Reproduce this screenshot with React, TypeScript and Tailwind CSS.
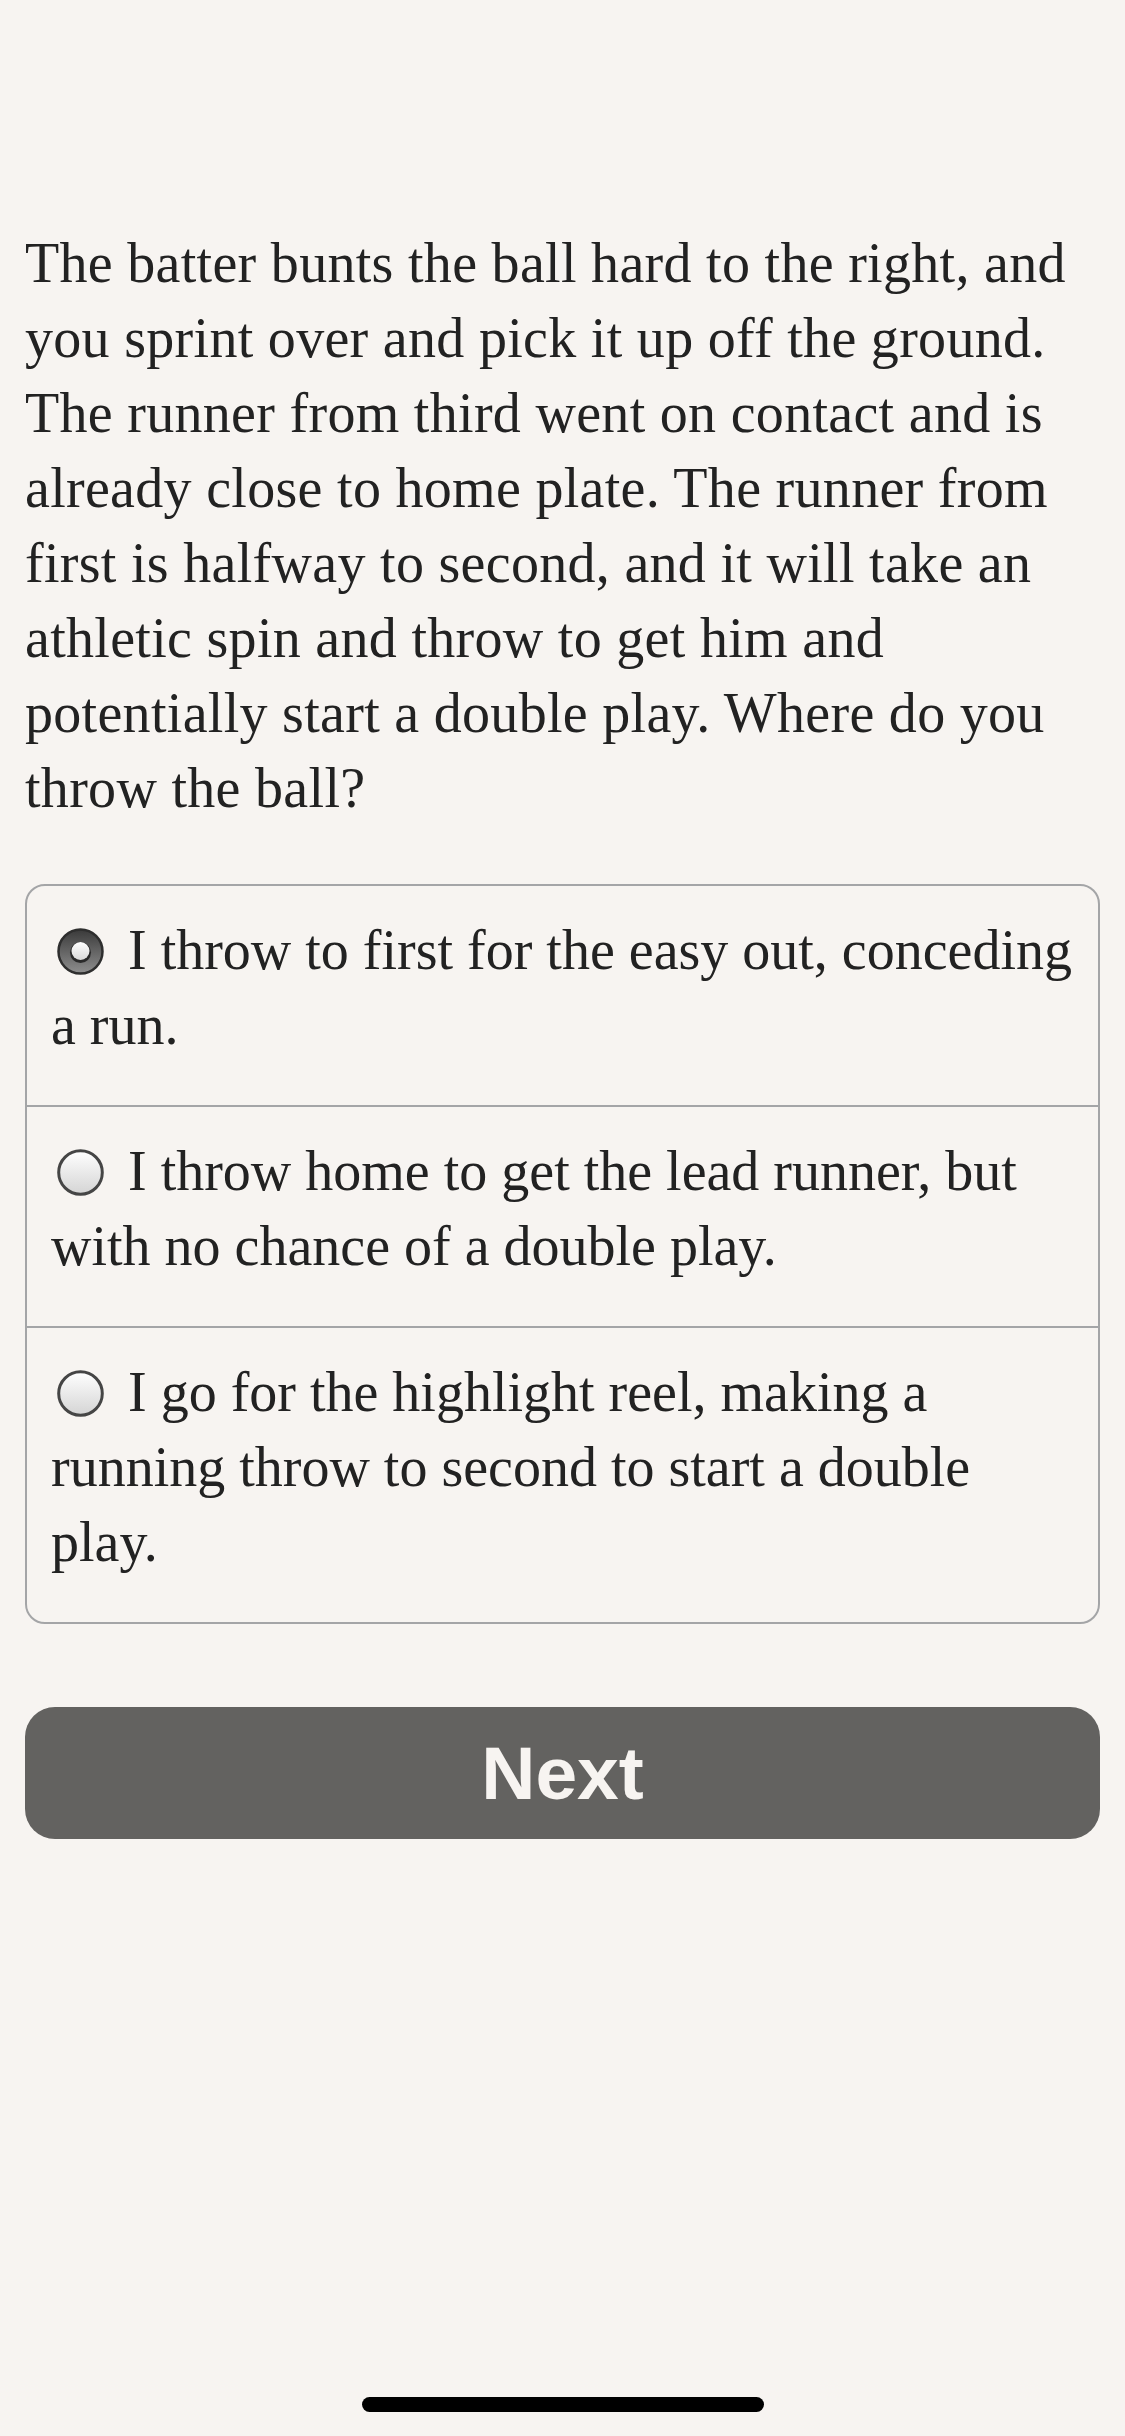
import { useState } from "react";

const options = [
  "I throw to first for the easy out, conceding a run.",
  "I throw home to get the lead runner, but with no chance of a double play.",
  "I go for the highlight reel, making a running throw to second to start a double play.",
];

function Radio({ checked }: { checked: boolean }) {
  return (
    <svg
      width="47"
      height="47"
      viewBox="0 0 47 47"
      className="inline-block ml-[6px] mr-[10px] align-[-6px]"
    >
      <defs>
        <linearGradient id="off" x1="0" y1="0" x2="0" y2="1">
          <stop offset="0" stopColor="#ffffff" />
          <stop offset="1" stopColor="#d4d4d4" />
        </linearGradient>
        <linearGradient id="on" x1="0" y1="0" x2="0" y2="1">
          <stop offset="0" stopColor="#3a3a3a" />
          <stop offset="1" stopColor="#8e8e8e" />
        </linearGradient>
        <linearGradient id="dot" x1="0" y1="0" x2="0" y2="1">
          <stop offset="0" stopColor="#ffffff" />
          <stop offset="1" stopColor="#d9d9d9" />
        </linearGradient>
      </defs>
      {checked ? (
        <>
          <circle cx="23.5" cy="23.5" r="22" fill="url(#on)" stroke="#2e2e2e" strokeWidth="2.5" />
          <circle cx="23.5" cy="24.5" r="10.5" fill="#2a2a2a" />
          <circle cx="23.5" cy="23" r="9" fill="url(#dot)" />
        </>
      ) : (
        <circle cx="23.5" cy="23.5" r="21.8" fill="url(#off)" stroke="#454545" strokeWidth="3" />
      )}
    </svg>
  );
}

export default function App() {
  const [picked, setPicked] = useState(0);

  return (
    <div className="min-h-[2436px] bg-[#f7f4f1] px-[25px] pt-[226px] text-[#222222] font-['Liberation_Serif',serif]">
      <p className="text-[56px] leading-[75px] tracking-[0.3px]">
        The batter bunts the ball hard to the right, and you sprint over and pick it up off
        the ground. The runner from third went on contact and is already close to home plate.
        The runner from first is halfway to second, and it will take an athletic spin and
        throw to get him and potentially start a double play. Where do you throw the ball?
      </p>

      {/* answer list */}
      <div className="mt-[58px] border-2 border-[#a4a5a7] rounded-[20px] overflow-hidden">
        {options.map((opt, i) => (
          <label
            key={i}
            onClick={() => setPicked(i)}
            className="block border-t-2 border-[#a4a5a7] first:border-t-0 pl-[24px] pr-[14px] pt-[27px] pb-[42px] text-[56px] leading-[75px] cursor-pointer"
          >
            <Radio checked={picked === i} /> {opt}
          </label>
        ))}
      </div>

      <button className="mt-[83px] w-full h-[132px] rounded-[30px] bg-[#636260] text-[#f7f4f1] text-[75px] font-bold font-['Liberation_Sans',Arial,sans-serif] flex items-center justify-center">
        Next
      </button>

      {/* home indicator */}
      <div className="fixed left-[362px] top-[2397px] w-[402px] h-[15px] rounded-full bg-black" />
    </div>
  );
}
